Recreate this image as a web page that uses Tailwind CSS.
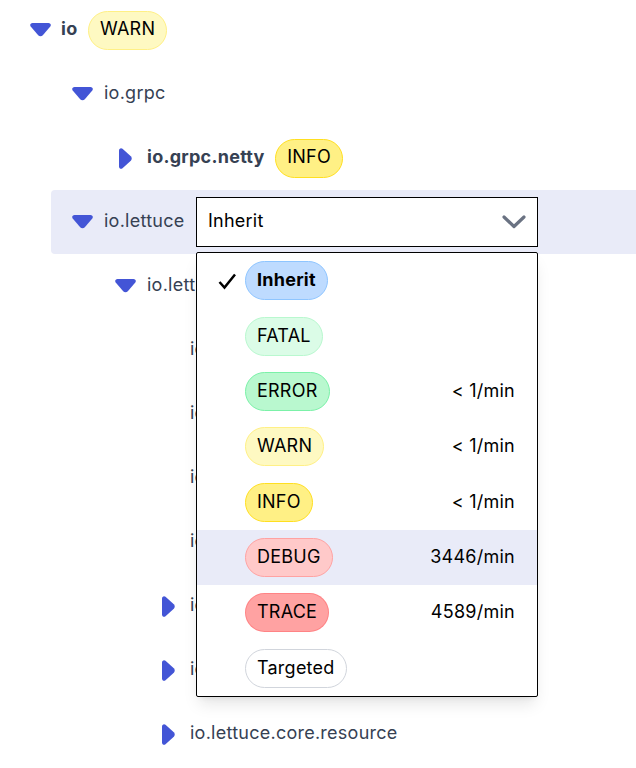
<!DOCTYPE html>
<html lang="en">
<head>
  <meta charset="UTF-8">
  <script src="https://cdn.jsdelivr.net/npm/@tailwindcss/browser@4"></script>
  <title>Loggers</title>
</head>
<body class="h-[768px] overflow-hidden bg-white font-['Inter',sans-serif] text-[18px] tracking-[0.25px] text-gray-700">
<div class="-mt-[2px]">

  <div class="flex h-16 items-center pl-[30px]">
    <svg class="mr-[10px] h-[14px] w-[21px] text-[#4355d6]" viewBox="0 0 21 14"><path fill="currentColor" d="M2.500 0h16c2 0 3 2 1.800 3.500l-7.500 8.800c-1.200 1.200-3.400 1.200-4.600 0L.7 3.500C-.5 2 .5 0 2.500 0z"/></svg>
    <span class="pb-1 font-bold">io</span>
    <span class="ml-[10.500px] flex h-[39px] items-center rounded-full border border-yellow-200 bg-yellow-100 px-[11px] pb-[3px] text-black">WARN</span>
  </div>

  <div class="flex h-16 items-center pl-[72px]">
    <svg class="mr-[11px] h-[14px] w-[21px] text-[#4355d6]" viewBox="0 0 21 14"><path fill="currentColor" d="M2.500 0h16c2 0 3 2 1.800 3.500l-7.500 8.800c-1.200 1.200-3.400 1.200-4.600 0L.7 3.500C-.5 2 .5 0 2.500 0z"/></svg>
    <span class="pb-1">io.grpc</span>
  </div>

  <div class="flex h-16 items-center pl-[119px]">
    <svg class="mr-[15px] h-[21px] w-[13px] text-[#4355d6]" viewBox="0 0 13 21"><path fill="currentColor" d="M0 2.500v16c0 2 2 3 3.500 1.800l8.300-7.500c1.200-1.200 1.200-3.400 0-4.600L3.500.7C2-.5 0 .5 0 2.500z"/></svg>
    <span class="pb-1 font-bold">io.grpc.netty</span>
    <span class="ml-[10.500px] flex h-[39px] items-center rounded-full border border-yellow-300 bg-yellow-200 px-[11px] pb-[3px] text-black">INFO</span>
  </div>

  <div class="ml-[51px] flex h-16 items-center rounded-l bg-[#e9ebf8] pl-[21px]">
    <svg class="mr-[11px] h-[14px] w-[21px] text-[#4355d6]" viewBox="0 0 21 14"><path fill="currentColor" d="M2.500 0h16c2 0 3 2 1.800 3.500l-7.500 8.800c-1.200 1.200-3.400 1.200-4.600 0L.7 3.500C-.5 2 .5 0 2.500 0z"/></svg>
    <span class="pb-1">io.lettuce</span>
    <div class="relative ml-[11.500px]">
      <div class="flex h-[50px] w-[342px] items-center justify-between border border-black bg-white pl-[11px] pr-[10px] text-black">
        <span class="pb-1">Inherit</span>
        <svg class="h-[16px] w-[26px] text-gray-500" viewBox="0 0 26 16"><path fill="none" stroke="currentColor" stroke-width="3.200" stroke-linecap="round" stroke-linejoin="round" d="M3 3l10 9.500L23 3"/></svg>
      </div>

      <div class="absolute top-[55px] left-0 z-10 w-[342px] rounded-[2px] border border-black bg-white text-black shadow-lg">
        <div class="flex h-[55.375px] items-center justify-between pl-[48px] pr-[22px]">
          <span class="relative flex h-[39px] items-center rounded-full border border-blue-300 bg-blue-200 px-[11px] pb-[3px] font-bold">
            <svg class="absolute top-[10.500px] -left-[28px] h-[17px] w-[19px]" viewBox="0 0 19 17"><path fill="none" stroke="black" stroke-width="2.500" d="M1.500 9l5 5.500L17 1.500"/></svg>
            Inherit
          </span>
        </div>
        <div class="flex h-[55.375px] items-center justify-between pl-[48px] pr-[22px]">
          <span class="flex h-[39px] items-center rounded-full border border-green-200 bg-green-100 px-[11px] pb-[2px]">FATAL</span>
        </div>
        <div class="flex h-[55.375px] items-center justify-between pl-[48px] pr-[22px]">
          <span class="flex h-[39px] items-center rounded-full border border-green-300 bg-green-200 px-[11px] pb-[2px]">ERROR</span>
          <span class="pb-[2px]">&lt; 1/min</span>
        </div>
        <div class="flex h-[55.375px] items-center justify-between pl-[48px] pr-[22px]">
          <span class="flex h-[39px] items-center rounded-full border border-yellow-200 bg-yellow-100 px-[11px] pb-[3px]">WARN</span>
          <span class="pb-[3px]">&lt; 1/min</span>
        </div>
        <div class="flex h-[55.375px] items-center justify-between pl-[48px] pr-[22px]">
          <span class="flex h-[39px] items-center rounded-full border border-yellow-300 bg-yellow-200 px-[11px] pb-[2px]">INFO</span>
          <span class="pb-[2px]">&lt; 1/min</span>
        </div>
        <div class="flex h-[55.375px] items-center justify-between bg-[#e9ebf8] pl-[48px] pr-[22px]">
          <span class="flex h-[39px] items-center rounded-full border border-red-300 bg-red-200 px-[11px] pb-[3px]">DEBUG</span>
          <span class="pb-[3px]">3446/min</span>
        </div>
        <div class="flex h-[55.375px] items-center justify-between pl-[48px] pr-[22px]">
          <span class="flex h-[39px] items-center rounded-full border border-red-400/50 bg-red-300 px-[11px] pb-[3px]">TRACE</span>
          <span class="pb-[3px]">4589/min</span>
        </div>
        <div class="flex h-[55.375px] items-center justify-between pl-[48px] pr-[22px]">
          <span class="flex h-[39px] items-center rounded-full border border-gray-300 bg-white px-[11px] pb-[2px]">Targeted</span>
        </div>
      </div>
    </div>
  </div>

  <div class="flex h-16 items-center pl-[115px]">
    <svg class="mr-[11px] h-[14px] w-[21px] text-[#4355d6]" viewBox="0 0 21 14"><path fill="currentColor" d="M2.500 0h16c2 0 3 2 1.800 3.500l-7.500 8.800c-1.200 1.200-3.400 1.200-4.600 0L.7 3.500C-.5 2 .5 0 2.500 0z"/></svg>
    <span class="pb-1">io.lett</span>
  </div>
  <div class="flex h-16 items-center pl-[190px]"><span class="pb-1">io</span></div>
  <div class="flex h-16 items-center pl-[190px]"><span class="pb-1">io</span></div>
  <div class="flex h-16 items-center pl-[190px]"><span class="pb-1">io</span></div>
  <div class="flex h-16 items-center pl-[190px]"><span class="pb-1">io</span></div>
  <div class="flex h-16 items-center pl-[162px]">
    <svg class="mr-[15px] h-[21px] w-[13px] text-[#4355d6]" viewBox="0 0 13 21"><path fill="currentColor" d="M0 2.500v16c0 2 2 3 3.500 1.800l8.300-7.500c1.200-1.200 1.200-3.400 0-4.600L3.500.7C2-.5 0 .5 0 2.500z"/></svg>
    <span class="pb-1">io</span>
  </div>
  <div class="flex h-16 items-center pl-[162px]">
    <svg class="mr-[15px] h-[21px] w-[13px] text-[#4355d6]" viewBox="0 0 13 21"><path fill="currentColor" d="M0 2.500v16c0 2 2 3 3.500 1.800l8.300-7.500c1.200-1.200 1.200-3.400 0-4.600L3.500.7C2-.5 0 .5 0 2.500z"/></svg>
    <span class="pb-1">io</span>
  </div>
  <div class="flex h-16 items-center pl-[162px]">
    <svg class="mr-[15px] h-[21px] w-[13px] text-[#4355d6]" viewBox="0 0 13 21"><path fill="currentColor" d="M0 2.500v16c0 2 2 3 3.500 1.800l8.300-7.500c1.200-1.200 1.200-3.400 0-4.600L3.500.7C2-.5 0 .5 0 2.500z"/></svg>
    <span class="pb-1">io.lettuce.core.resource</span>
  </div>
</div>
</body>
</html>
